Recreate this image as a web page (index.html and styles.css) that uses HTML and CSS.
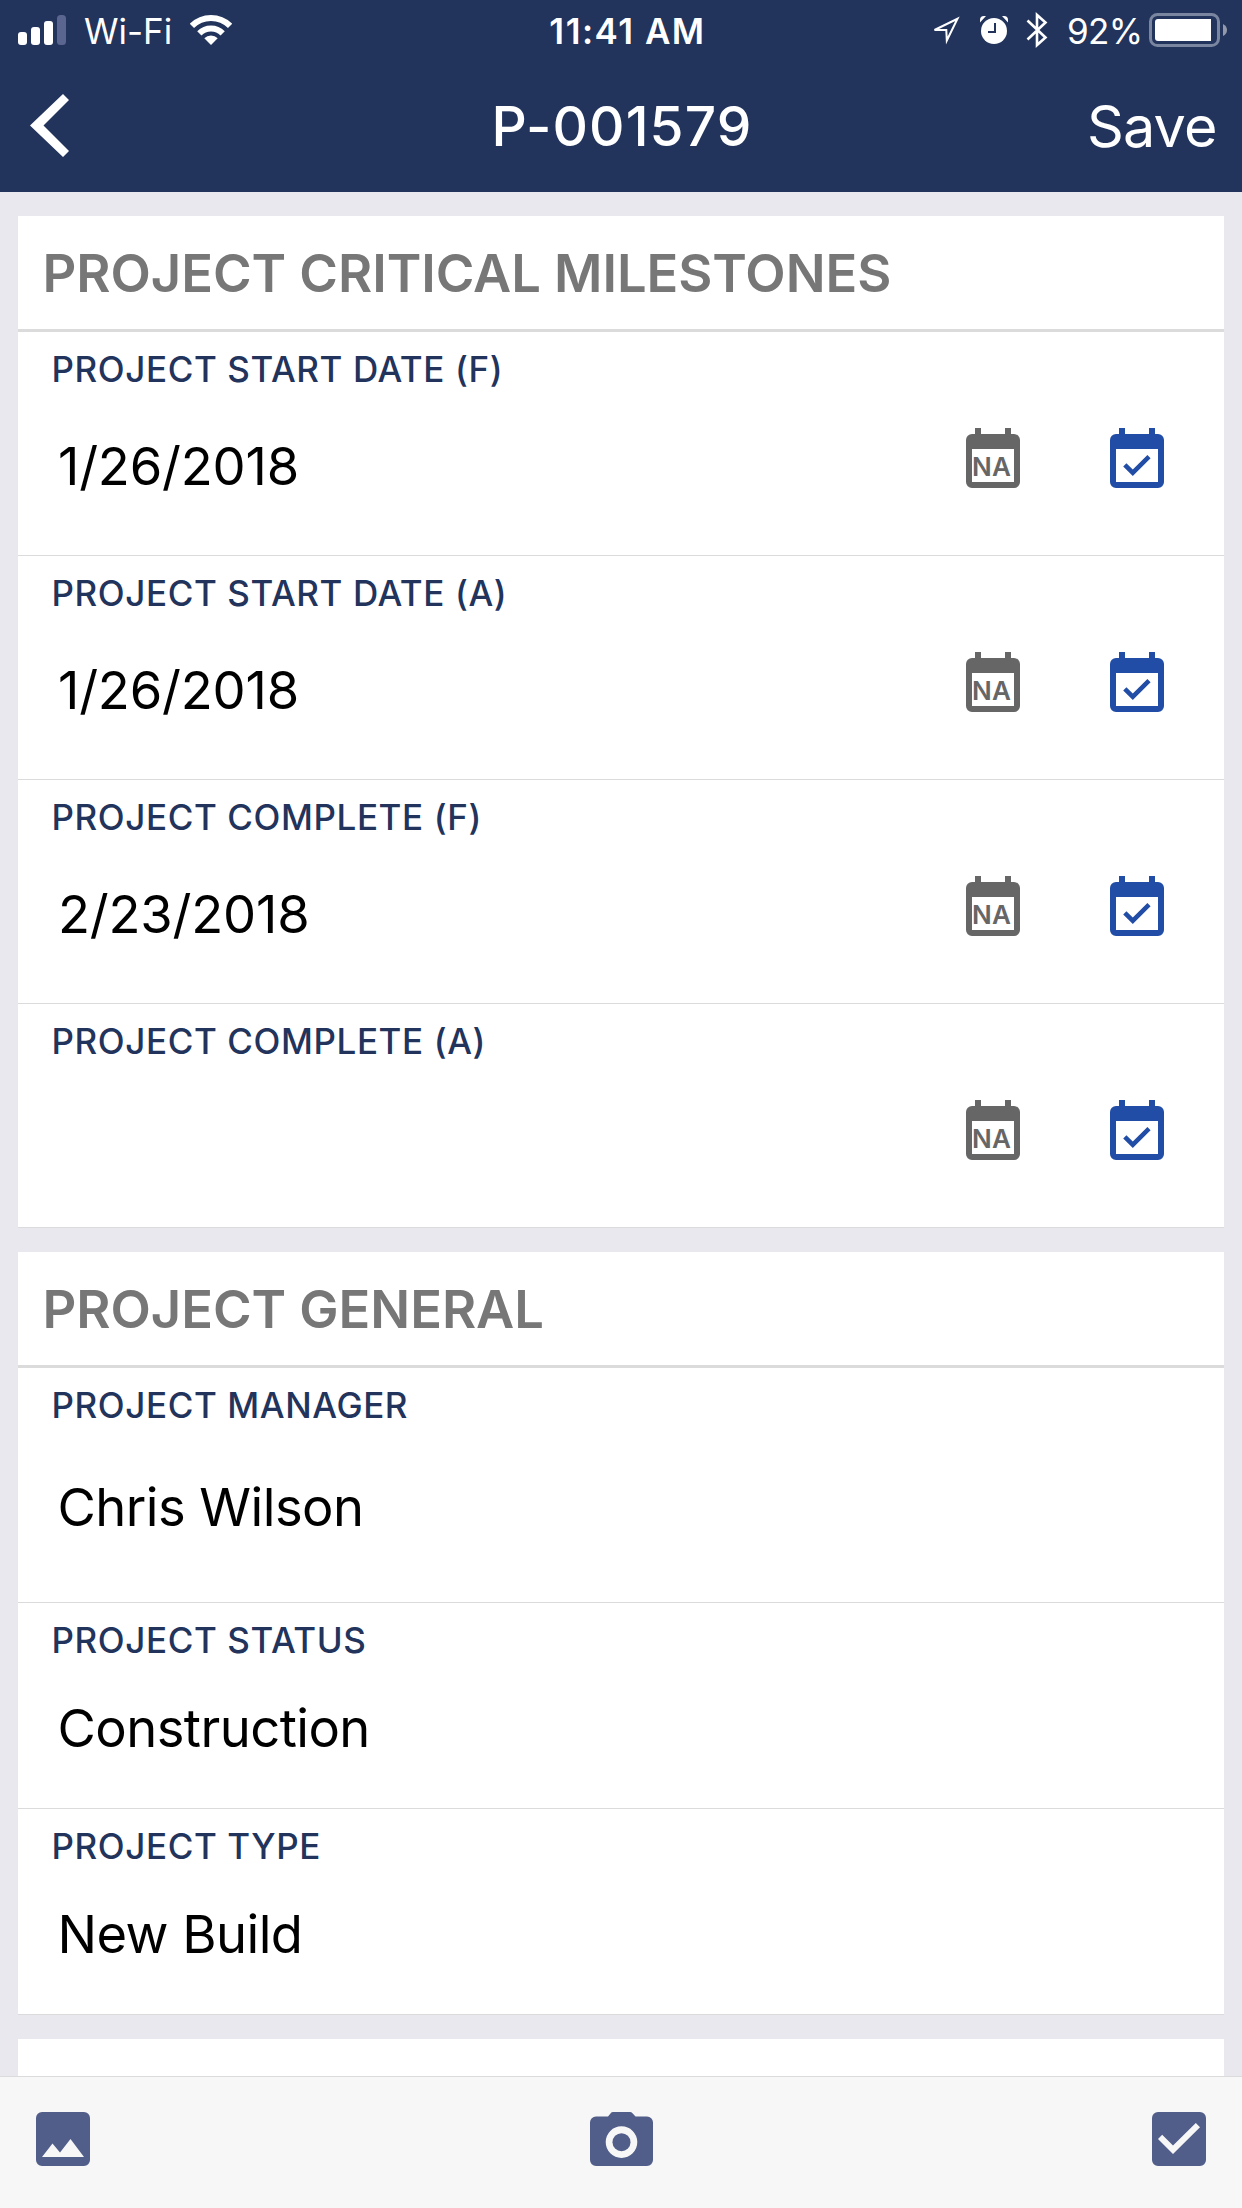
FILE: index.html
```
<!DOCTYPE html>
<html lang="en">
<head>
<meta charset="utf-8">
<title>P-001579</title>
<link rel="stylesheet" href="styles.css">
</head>
<body>
<svg class="symbols" aria-hidden="true">
  <symbol id="calendar-na" viewBox="0 0 54 60">
    <path fill-rule="evenodd" d="M9 0h6v6h24V0h6v6h3a6 6 0 0 1 6 6v42a6 6 0 0 1-6 6H6a6 6 0 0 1-6-6V12a6 6 0 0 1 6-6h3zM6 21v33h42V21z"/>
    <text class="na-text" x="6" y="48">NA</text>
  </symbol>
  <symbol id="calendar-check" viewBox="0 0 54 60">
    <path fill-rule="evenodd" d="M9 0h6v6h24V0h6v6h3a6 6 0 0 1 6 6v42a6 6 0 0 1-6 6H6a6 6 0 0 1-6-6V12a6 6 0 0 1 6-6h3zM6 21v33h42V21z"/>
    <path d="M40.6 30.2 37.4 27 22.8 41.6 16.4 35.3 13.2 38.5 22.8 48z"/>
  </symbol>
</svg>
<div class="app">
  <header class="header">
    <div class="status-bar">
      <div class="status-left">
        <svg class="signal" viewBox="0 0 48 30"><rect y="17" width="9" height="13" rx="3"/><rect x="13" y="12" width="9" height="18" rx="3"/><rect x="26" y="6" width="9" height="24" rx="3"/><rect class="dim" x="39" width="9" height="30" rx="3.5"/></svg>
        <span class="carrier">Wi-Fi</span>
        <svg class="wifi" viewBox="0 0 42 30"><path class="arc" d="M1.91 10.91a27 27 0 0 1 38.18 0M9.33 18.33a16.5 16.5 0 0 1 23.34 0"/><path d="M21 30l-6.7-6.7a9.5 9.5 0 0 1 13.4 0z"/></svg>
      </div>
      <time class="clock">11:41 AM</time>
      <div class="status-right">
        <svg class="location" viewBox="0 0 30 30"><path d="M3.500 14 26.500 2.800 15.800 24.500 15.300 14z"/></svg>
        <svg class="alarm" viewBox="0 0 28 28"><circle cx="14" cy="15" r="13"/><path d="M0 6.500V4a4 4 0 0 1 4-4h2z M28 6.500V4a4 4 0 0 0-4-4h-2z"/><path class="hands" d="M15 7v9H8"/></svg>
        <svg class="bluetooth" viewBox="0 0 22 36"><path d="M1.500 8.500 19.500 25.500 11 33V3l8.500 7.500L1.500 27.500"/></svg>
        <span class="percent">92%</span>
        <svg class="battery" viewBox="0 0 78 34"><rect class="shell" x="1.500" y="1.500" width="68" height="31" rx="7"/><path class="charge" d="M9 6h53v22H9a3 3 0 0 1-3-3V9a3 3 0 0 1 3-3z"/><path class="nub" d="M74 11q4 2 4 6t-4 6z"/></svg>
      </div>
    </div>
    <nav class="nav">
      <a class="back" aria-label="Back"><svg viewBox="0 0 39 63"><path d="M33 0 39 6 13.500 31.500 39 57 33 63 0 31.500z"/></svg></a>
      <h1 class="nav-title">P-001579</h1>
      <a class="save">Save</a>
    </nav>
  </header>

  <main class="content">
    <section class="card">
      <h2 class="card-title">PROJECT CRITICAL MILESTONES</h2>
      <div class="row row-date">
        <div class="field"><div class="label">PROJECT START DATE (F)</div><div class="value">1/26/2018</div></div>
        <div class="actions"><svg class="na"><use href="#calendar-na"/></svg><svg class="pick"><use href="#calendar-check"/></svg></div>
      </div>
      <div class="row row-date">
        <div class="field"><div class="label">PROJECT START DATE (A)</div><div class="value">1/26/2018</div></div>
        <div class="actions"><svg class="na"><use href="#calendar-na"/></svg><svg class="pick"><use href="#calendar-check"/></svg></div>
      </div>
      <div class="row row-date">
        <div class="field"><div class="label">PROJECT COMPLETE (F)</div><div class="value">2/23/2018</div></div>
        <div class="actions"><svg class="na"><use href="#calendar-na"/></svg><svg class="pick"><use href="#calendar-check"/></svg></div>
      </div>
      <div class="row row-date">
        <div class="field"><div class="label">PROJECT COMPLETE (A)</div><div class="value"></div></div>
        <div class="actions"><svg class="na"><use href="#calendar-na"/></svg><svg class="pick"><use href="#calendar-check"/></svg></div>
      </div>
    </section>

    <section class="card">
      <h2 class="card-title">PROJECT GENERAL</h2>
      <div class="row row-person">
        <div class="field"><div class="label">PROJECT MANAGER</div><div class="value">Chris Wilson</div></div>
      </div>
      <div class="row row-text">
        <div class="field"><div class="label">PROJECT STATUS</div><div class="value">Construction</div></div>
      </div>
      <div class="row row-text">
        <div class="field"><div class="label">PROJECT TYPE</div><div class="value">New Build</div></div>
      </div>
    </section>

    <section class="card card-next"></section>
  </main>

  <footer class="toolbar">
    <svg class="tool" viewBox="0 0 54 54"><path fill-rule="evenodd" d="M6 0h42a6 6 0 0 1 6 6v42a6 6 0 0 1-6 6H6a6 6 0 0 1-6-6V6a6 6 0 0 1 6-6zM6 45h42L34.500 27 24 40.500 16.500 31.500z"/></svg>
    <svg class="tool tool-camera" viewBox="0 0 63 54"><path fill-rule="evenodd" d="M23 0h17q1.500 0 2.500 1.200L45.500 4.500H57a6 6 0 0 1 6 6V48a6 6 0 0 1-6 6H6a6 6 0 0 1-6-6V10.500a6 6 0 0 1 6-6h12L20.700 1.200Q21.500 0 23 0zM31.500 14.300a15.800 15.800 0 1 0 0 31.600 15.800 15.800 0 1 0 0-31.600z"/><circle cx="31.500" cy="30.200" r="9"/></svg>
    <svg class="tool" viewBox="0 0 54 54"><path fill-rule="evenodd" d="M6 0h42a6 6 0 0 1 6 6v42a6 6 0 0 1-6 6H6a6 6 0 0 1-6-6V6a6 6 0 0 1 6-6zM21 42 48 15.200 43.800 11 21 33.500 10.200 22.800 6 27z"/></svg>
  </footer>
</div>
</body>
</html>
```
FILE: styles.css
```
* {
  box-sizing: border-box;
}

body {
  margin: 0;
  font-family: "Inter", "Liberation Sans", sans-serif;
  background: #e9e8ee;
}

svg {
  display: block;
  flex: none;
}

.symbols {
  display: none;
}

.app {
  display: flex;
  flex-direction: column;
  height: 2208px;
  overflow: hidden;
}

/* Header */
.header {
  flex: none;
  height: 192px;
  background: #22335c;
  color: #fff;
}

.status-bar,
.nav {
  display: grid;
  grid-template-columns: 1fr auto 1fr;
}

.status-bar {
  height: 62px;
  font-size: 35px;
  line-height: 62px;
}

.status-bar svg {
  fill: #fff;
}

.status-left,
.status-right {
  display: flex;
  align-items: flex-start;
}

.status-left {
  padding-left: 18px;
}

.status-right {
  justify-content: flex-end;
  padding-right: 15px;
}

.signal {
  width: 48px;
  height: 30px;
  margin-top: 15px;
}

.signal .dim {
  fill: #5a668f;
}

.carrier {
  width: 89px;
  margin-left: 18px;
  font-weight: 400;
  white-space: nowrap;
}

.wifi {
  width: 42px;
  height: 30px;
  margin: 15px 0 0 17px;
}

.wifi .arc {
  fill: none;
  stroke: #fff;
  stroke-width: 6;
}

.clock {
  padding-left: 13px;
  font-weight: 600;
  letter-spacing: 1.5px;
}

.location {
  width: 30px;
  height: 30px;
  margin: 16px 19px 0 0;
}

.status-bar .location path,
.status-bar .bluetooth path {
  fill: none;
  stroke: #fff;
  stroke-width: 2;
}

.alarm {
  width: 28px;
  height: 28px;
  margin: 16px 18px 0 0;
}

.alarm .hands {
  fill: none;
  stroke: #22335c;
  stroke-width: 2;
}

.bluetooth {
  width: 22px;
  height: 36px;
  margin: 12px 19px 0 0;
}

.status-bar .bluetooth path {
  stroke-width: 2.6;
}

.percent {
  width: 82px;
  font-weight: 400;
  letter-spacing: -0.7px;
}

.battery {
  width: 78px;
  height: 34px;
  margin-top: 13px;
}

.status-bar .battery .shell {
  fill: none;
  stroke: #7a85a0;
  stroke-width: 3;
}

.battery .nub {
  fill: #9299ab;
}

.nav {
  height: 129px;
  line-height: 129px;
}

.back {
  padding: 32px 0 0 30px;
}

.back svg {
  width: 39px;
  height: 63px;
  fill: #fff;
}

.nav-title {
  margin: 0;
  padding-left: 2px;
  font-size: 55px;
  font-weight: 500;
  letter-spacing: 1.1px;
}

.save {
  padding-right: 25.5px;
  font-size: 57.5px;
  letter-spacing: -0.9px;
  text-align: right;
}

/* Cards */
.content {
  flex: 1;
  min-height: 0;
  padding: 24px 18px 0;
  overflow: hidden;
}

.card {
  margin-bottom: 24px;
  background: #fff;
}

.card-title {
  height: 116px;
  margin: 0;
  padding-left: 24.5px;
  border-bottom: 3px solid #dbdbdb;
  color: #777;
  font-size: 52.5px;
  font-weight: 600;
  line-height: 115px;
  letter-spacing: -0.05px;
}

.card-next {
  height: 116px;
}

.row {
  display: flex;
  justify-content: space-between;
  border-bottom: 1px solid #dbdbdc;
}

.row-date {
  height: 224px;
}

.row-person {
  height: 235px;
}

.row-text {
  height: 206px;
}

.field {
  padding: 16px 0 0 33.5px;
}

.label {
  color: #22335c;
  font-size: 35px;
  font-weight: 500;
  line-height: 42px;
  letter-spacing: 0.59px;
}

.value {
  margin: 35px 0 0 6px;
  color: #000;
  font-size: 52.5px;
  line-height: 64px;
  letter-spacing: -0.55px;
}

.row-date .value {
  margin: 44px 0 0 6.5px;
  letter-spacing: -0.2px;
}

.row-person .value {
  margin-top: 49px;
}

.actions {
  display: flex;
  gap: 90px;
  padding: 96px 60px 0 0;
}

.actions svg {
  width: 54px;
  height: 60px;
}

.actions .na {
  fill: #666;
}

.actions .pick {
  fill: #214da6;
}

.na-text {
  font-size: 26px;
  font-weight: 600;
  letter-spacing: 0.3px;
}

/* Bottom toolbar */
.toolbar {
  display: flex;
  flex: none;
  justify-content: space-between;
  height: 132px;
  padding: 35px 36px 0;
  border-top: 1px solid #dbdbdc;
  background: #f7f7f7;
}

.tool {
  width: 54px;
  height: 54px;
  fill: #515e8a;
}

.tool-camera {
  width: 63px;
}
```
